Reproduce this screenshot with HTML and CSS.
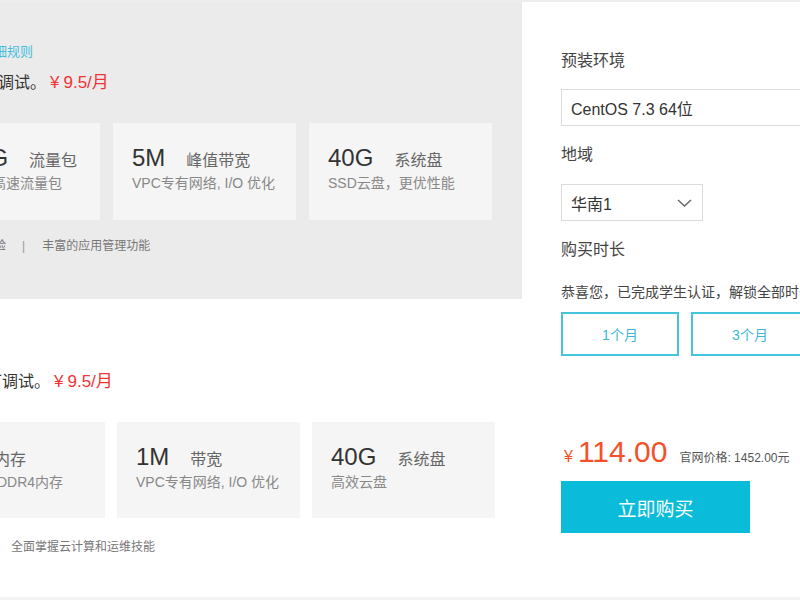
FILE: index.html
```html
<!DOCTYPE html>
<html lang="zh-CN">
<head>
<meta charset="utf-8">
<title>学生专享云服务器</title>
<link rel="stylesheet" href="styles.css">
</head>
<body>
<div class="page">
  <div class="plans">
    <section class="plan plan-grey">
      <p class="rule"><a href="#">查看详细规则</a></p>
      <p class="desc"><span>程序调试。</span><span class="price-tag"><span class="price-yen">¥</span>9.5/月</span></p>
      <div class="cards">
        <div class="card">
          <div class="spec"><span class="spec-value">1000G</span><span class="spec-name">流量包</span></div>
          <div class="spec-note">免费赠送高速流量包</div>
        </div>
        <div class="card">
          <div class="spec"><span class="spec-value">5M</span><span class="spec-name">峰值带宽</span></div>
          <div class="spec-note">VPC专有网络, I/O 优化</div>
        </div>
        <div class="card">
          <div class="spec"><span class="spec-value">40G</span><span class="spec-name">系统盘</span></div>
          <div class="spec-note">SSD云盘，更优性能</div>
        </div>
      </div>
      <p class="feats"><span>极速体验</span><span class="sep">|</span><span>丰富的应用管理功能</span></p>
    </section>
    <section class="plan plan-white">
      <p class="desc"><span>随时可调试。</span><span class="price-tag"><span class="price-yen">¥</span>9.5/月</span></p>
      <div class="cards">
        <div class="card">
          <div class="spec"><span class="spec-value">2G</span><span class="spec-name">内存</span></div>
          <div class="spec-note">最新一代DDR4内存</div>
        </div>
        <div class="card">
          <div class="spec"><span class="spec-value">1M</span><span class="spec-name">带宽</span></div>
          <div class="spec-note">VPC专有网络, I/O 优化</div>
        </div>
        <div class="card">
          <div class="spec"><span class="spec-value">40G</span><span class="spec-name">系统盘</span></div>
          <div class="spec-note">高效云盘</div>
        </div>
      </div>
      <p class="feats feats-low">全面掌握云计算和运维技能</p>
    </section>
  </div>

  <aside class="order">
    <div class="field-label">预装环境</div>
    <div class="select select-wide">CentOS 7.3 64位</div>
    <div class="field-label gap">地域</div>
    <div class="select select-region">
      <span>华南1</span>
      <svg class="chevron" width="15" height="8" viewBox="0 0 15 8"><path d="M1 1l6.5 6L14 1" fill="none" stroke="#666" stroke-width="1.5"/></svg>
    </div>
    <div class="field-label gap">购买时长</div>
    <p class="notice">恭喜您，已完成学生认证，解锁全部时长优惠</p>
    <div class="durations">
      <div class="duration">1个月</div>
      <div class="duration">3个月</div>
      <div class="duration">6个月</div>
    </div>
    <div class="price-row">
      <span class="yen">¥</span><span class="amount">114.00</span><span class="official">官网价格: 1452.00元</span>
    </div>
    <button class="buy" type="button">立即购买</button>
  </aside>
</div>
</body>
</html>
```

FILE: styles.css
```css
* {
  box-sizing: border-box;
  margin: 0;
  padding: 0;
}

html,
body {
  width: 800px;
  height: 600px;
  overflow: hidden;
}

body {
  font-family: "Liberation Sans", "Noto Sans CJK SC", sans-serif;
  color: #333;
  background: #fff;
}

.page {
  display: flex;
  height: 600px;
  border-top: 2px solid #eeeeee;
  border-bottom: 3px solid #f2f2f2;
}

/* ---------- left: plans ---------- */
.plans {
  width: 522px;
  flex: none;
  display: flex;
  flex-direction: column;
}

.plan {
  height: 297px;
  white-space: nowrap;
}

.plan-grey {
  background: #ebebeb;
  padding-top: 40px;
}

.plan-white {
  height: 298px;
  padding-top: 71px;
}

.rule {
  font-size: 13px;
  line-height: 20px;
  margin-left: -45px;
}

.rule a {
  color: #45bedb;
  text-decoration: none;
}

.desc {
  display: flex;
  align-items: baseline;
  font-size: 16px;
  line-height: 24px;
  color: #333;
}

.plan-grey .desc {
  margin-top: 9px;
  margin-left: -34px;
}

.plan-white .desc {
  margin-left: -46px;
}

.price-tag {
  color: #f03333;
  font-size: 17px;
  margin-left: 4px;
}

.price-yen {
  margin-right: 4px;
}

.cards {
  display: flex;
  gap: 13px;
  margin-top: 28px;
  margin-left: -83px;
}

.plan-white .cards {
  gap: 12px;
  margin-left: -78px;
}

.card {
  width: 183px;
  height: 97px;
  flex: none;
  background: #f5f5f5;
  padding: 20px 0 0 19px;
}

.plan-white .card {
  height: 96px;
}

.spec {
  display: flex;
  align-items: baseline;
  height: 30px;
  line-height: 30px;
}

.spec-value {
  font-size: 24px;
  color: #333;
}

.spec-name {
  font-size: 16px;
  color: #666;
  margin-left: 21px;
}

.spec-note {
  font-size: 14px;
  line-height: 20px;
  color: #888;
}

.feats {
  font-size: 12px;
  line-height: 18px;
  color: #777;
  margin-top: 17px;
  margin-left: -42px;
}

.sep {
  color: #999;
  margin: 0 17px 0 16px;
}

.feats-low {
  margin-top: 20px;
  margin-left: 11px;
}

/* ---------- right: order ---------- */
.order {
  flex: 1;
  padding: 47px 0 0 39px;
  white-space: nowrap;
}

.field-label {
  font-size: 16px;
  line-height: 24px;
  color: #444;
}

.field-label.gap {
  margin-top: 17px;
}

.select {
  height: 37px;
  margin-top: 16px;
  border: 1px solid #dcdcdc;
  padding-left: 9px;
  display: flex;
  align-items: center;
  font-size: 16px;
  color: #333;
}

.field-label.gap + .select {
  margin-top: 17px;
}

.select-wide {
  width: 300px;
}

.select-region {
  width: 142px;
  justify-content: space-between;
  padding-right: 10px;
}

.chevron {
  display: block;
}

.notice {
  margin-top: 20px;
  font-size: 14px;
  line-height: 20px;
  color: #444;
}

.durations {
  display: flex;
  gap: 12px;
  margin-top: 10px;
}

.duration {
  width: 118px;
  height: 44px;
  flex: none;
  border: 2px solid #45c4de;
  display: flex;
  align-items: center;
  justify-content: center;
  font-size: 14px;
  color: #3db6d8;
}

.price-row {
  display: flex;
  align-items: baseline;
  height: 36px;
  line-height: 36px;
  margin-top: 78px;
  padding-left: 3px;
}

.yen {
  font-size: 16px;
  color: #f5502a;
}

.amount {
  font-size: 30px;
  color: #f5502a;
  margin-left: 5px;
}

.official {
  font-size: 12px;
  color: #555;
  margin-left: 12px;
}

.buy {
  display: flex;
  align-items: center;
  justify-content: center;
  width: 189px;
  height: 52px;
  margin-top: 11px;
  border: none;
  background: #0abcd9;
  color: #fff;
  font-family: inherit;
  font-size: 19px;
}
```
